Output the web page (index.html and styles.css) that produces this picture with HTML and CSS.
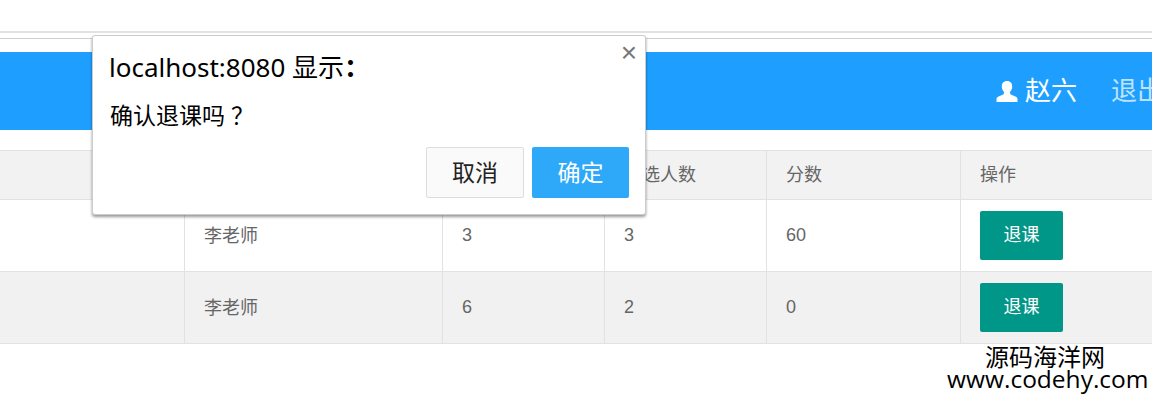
FILE: index.html
```html
<!DOCTYPE html>
<html lang="zh-CN">
<head>
    <meta charset="UTF-8">
    <title>我的课程</title>
    <link rel="stylesheet" href="styles.css">
</head>
<body>
    <!-- Browser strip -->
    <div class="top-strip">
        <div class="line-one"></div>
        <div class="line-two"></div>
    </div>

    <!-- Header -->
    <div class="header">
        <svg class="user-icon" viewBox="0 0 22 21" width="22" height="21">
            <path fill="#fff" d="M11 0C7.500 0 5.800 2.400 5.800 5.400c0 2.300.9 4.200 2.100 5.400v1.700c0 .8-1 1.400-3 2.100C2.300 15.500.5 16.200.5 18.200V21h21v-2.800c0-2-1.800-2.700-4.400-3.600-2-.7-3-1.300-3-2.100v-1.700c1.200-1.200 2.100-3.100 2.100-5.400C16.200 2.400 14.500 0 11 0z"/>
        </svg>
        <span class="user-name">赵六</span>
        <a class="logout">退出</a>
    </div>

    <!-- Course table -->
    <table class="course-table">
        <colgroup>
            <col class="col-name">
            <col class="col-teacher">
            <col class="col-credit">
            <col class="col-count">
            <col class="col-score">
            <col class="col-action">
        </colgroup>
        <thead>
            <tr>
                <th></th>
                <th>任课老师</th>
                <th>学分</th>
                <th>已选人数</th>
                <th>分数</th>
                <th>操作</th>
            </tr>
        </thead>
        <tbody>
            <tr>
                <td></td>
                <td class="teacher">李老师</td>
                <td>3</td>
                <td>3</td>
                <td>60</td>
                <td><button class="drop-btn">退课</button></td>
            </tr>
            <tr class="even">
                <td></td>
                <td class="teacher">李老师</td>
                <td>6</td>
                <td>2</td>
                <td>0</td>
                <td><button class="drop-btn">退课</button></td>
            </tr>
        </tbody>
    </table>

    <!-- Confirm dialog -->
    <div class="dialog">
        <span class="dialog-close">×</span>
        <div class="dialog-title">localhost:8080 显示<b>：</b></div>
        <div class="dialog-text">确认退课吗<span class="q-mark">？</span></div>
        <div class="dialog-buttons">
            <button class="btn-cancel">取消</button>
            <button class="btn-ok">确定</button>
        </div>
    </div>

    <!-- Watermark -->
    <div class="watermark">
        <div class="mark-name">源码海洋网</div>
        <div class="mark-url">www.codehy.com</div>
    </div>
</body>
</html>
```

FILE: styles.css
```css
html, body {
    height: 100%;
}

body {
    margin: 0;
    position: relative;
    overflow: hidden;
    background: #fff;
    font-family: "Liberation Sans", "Noto Sans CJK SC", sans-serif;
}

.top-strip {
    height: 52px;
    padding-top: 31px;
    box-sizing: border-box;
}

.line-one {
    height: 2px;
    background: #e2e2e2;
}

.line-two {
    height: 1px;
    margin-top: 5px;
    background: #cfcfcf;
}

.header {
    height: 78px;
    box-sizing: border-box;
    background: #1e9fff;
    display: flex;
    align-items: center;
    justify-content: flex-end;
    margin-right: -11px;
    font-size: 26px;
    line-height: 34px;
    white-space: nowrap;
}

.user-icon {
    margin-right: 7px;
}

.user-name {
    color: #fff;
    margin-right: 34px;
}

.logout {
    color: #bfe3ff;
}

.course-table {
    width: 1200px;
    margin-top: 20px;
    margin-left: -10px;
    border-collapse: collapse;
    table-layout: fixed;
    font-size: 18px;
    color: #666;
}

.col-name { width: 194px; }
.col-teacher { width: 258px; }
.col-credit { width: 162px; }
.col-count { width: 162px; }
.col-score { width: 194px; }
.col-action { width: 230px; }

.course-table th,
.course-table td {
    border: 1px solid #e2e2e2;
    padding: 0 19px;
    text-align: left;
    font-weight: normal;
}

.course-table th {
    height: 44px;
    padding-bottom: 4px;
    background: #f2f2f2;
}

.course-table td {
    height: 71px;
}

.course-table td.teacher {
    height: 67px;
    padding-bottom: 4px;
}

.even td {
    background: #f1f1f1;
}

.drop-btn {
    display: block;
    width: 83px;
    height: 49px;
    border: none;
    border-radius: 2px;
    background: #009688;
    color: #fff;
    font-family: inherit;
    font-size: 18px;
    padding: 0 0 5px;
}

.dialog {
    position: absolute;
    left: 92px;
    top: 35px;
    width: 554px;
    height: 180px;
    box-sizing: border-box;
    padding: 14px 16px 16px 17px;
    background: #fff;
    border: 1px solid #ccc;
    border-radius: 3px;
    box-shadow: 0 2px 3px rgba(0, 0, 0, 0.4);
    color: #000;
}

.dialog-close {
    position: absolute;
    top: 4px;
    right: 8px;
    font-size: 28px;
    line-height: 26px;
    color: #777;
}

.dialog-title {
    margin-left: -1px;
    font-family: "Noto Sans", "Noto Sans CJK SC", sans-serif;
    font-size: 26px;
    line-height: 34px;
    white-space: nowrap;
}

.dialog-text {
    margin-top: 15px;
    font-size: 23px;
    line-height: 30px;
}

.q-mark {
    margin-left: 6px;
    font-family: "Noto Sans CJK TC", sans-serif;
}

.dialog-buttons {
    display: flex;
    justify-content: flex-end;
    gap: 8px;
    margin-top: 16px;
}

.dialog-buttons button {
    height: 51px;
    padding: 0 0 3px;
    border-radius: 2px;
    font-family: inherit;
    font-size: 23px;
}

.btn-cancel {
    width: 98px;
    background: #fafafa;
    border: 1px solid #ddd;
    color: #222;
}

.btn-ok {
    width: 97px;
    background: #2ea8f8;
    border: none;
    color: #fff;
}

.watermark {
    position: absolute;
    right: 4px;
    top: 346px;
    width: 201px;
    text-align: center;
    color: #000;
}

.mark-name {
    font-size: 24px;
    line-height: 24px;
    margin-right: 5px;
}

.mark-url {
    font-family: "Open Sans", sans-serif;
    font-size: 24.5px;
    line-height: 18px;
    white-space: nowrap;
}
```
